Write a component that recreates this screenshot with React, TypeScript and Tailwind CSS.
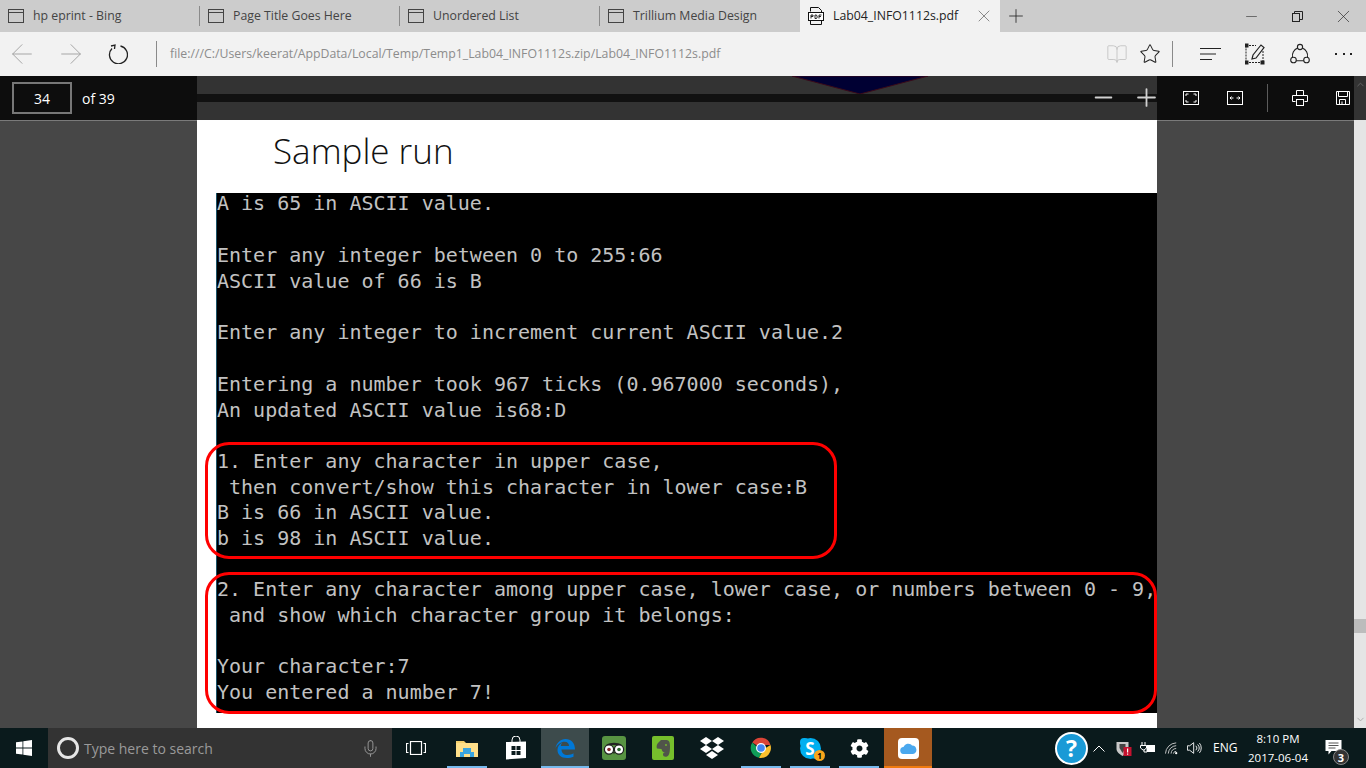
import React from 'react';
import { Minus, Plus, X, ArrowLeft, ArrowRight, Star, BookOpen, ChevronUp, ChevronDown, Mic } from 'lucide-react';
import { FaCog } from 'react-icons/fa';

const ui = "font-['Open_Sans',sans-serif]";

const terminalLines = [
  '',
  'Enter any integer between 0 to 255:66',
  'ASCII value of 66 is B',
  '',
  'Enter any integer to increment current ASCII value.2',
  '',
  'Entering a number took 967 ticks (0.967000 seconds),',
  'An updated ASCII value is68:D',
  '',
  '1. Enter any character in upper case,',
  ' then convert/show this character in lower case:B',
  'B is 66 in ASCII value.',
  'b is 98 in ASCII value.',
  '',
  '2. Enter any character among upper case, lower case, or numbers between 0 - 9,',
  ' and show which character group it belongs:',
  '',
  'Your character:7',
  'You entered a number 7!',
];

function TabIcon() {
  return (
    <svg width="16" height="14" viewBox="0 0 16 14" fill="none" stroke="#444" strokeWidth="1">
      <rect x="0.5" y="0.5" width="15" height="13" />
      <path d="M0.5 3.5h15" />
    </svg>
  );
}

function Tab({ title }: { title: string }) {
  return (
    <div className="w-[200px] h-full flex items-center pl-[8px] relative">
      <TabIcon />
      <span className="ml-[9px] text-[12.3px] text-[#444]">{title}</span>
      <div className="absolute right-0 top-[6px] h-[20px] w-px bg-[#8a8a8a]" />
    </div>
  );
}

function TabBar() {
  return (
    <div className={`h-[32px] bg-[#cccccc] flex items-center shrink-0 ${ui}`}>
      <Tab title="hp eprint - Bing" />
      <Tab title="Page Title Goes Here" />
      <Tab title="Unordered List" />
      <div className="w-[200px] h-full flex items-center pl-[8px]">
        <TabIcon />
        <span className="ml-[9px] text-[12.3px] text-[#444]">Trillium Media Design</span>
      </div>
      <div className="w-[200px] h-full bg-[#f2f2f2] flex items-center pl-[8px] pr-[6px]">
        <svg width="16" height="20" viewBox="0 0 16 20" fill="none" stroke="#111" strokeWidth="1">
          <path d="M2.5 5.5V1.5h8l3 3v2M2.5 15v3.5h11V15" />
          <rect x="0.5" y="6.5" width="15" height="8" fill="#fff" />
          <path d="M3 12.500V9h2v1.500H3M7 9v3.500h1.500l.8-1.500L8.500 9zM11 12.500V9h2.500M11 10.500h2" strokeWidth="0.9" />
        </svg>
        <span className="ml-[9px] text-[12.3px] text-[#222]">Lab04_INFO1112s.pdf</span>
        <X className="ml-auto text-[#555]" size={20} strokeWidth={0.8} />
      </div>
      <Plus className="ml-[5px] text-[#222]" size={22} strokeWidth={0.9} />
      <div className="ml-auto flex items-center h-full text-[#222]">
        <div className="w-[46px] flex justify-center"><Minus size={17} strokeWidth={0.8} /></div>
        <div className="w-[46px] flex justify-center">
          <svg width="11" height="11" viewBox="0 0 11 11" fill="none" stroke="#222"><rect x="0.500" y="2.500" width="7" height="8" /><path d="M2.500 2.500v-2h8v8h-3" /></svg>
        </div>
        <div className="w-[46px] flex justify-center"><X size={21} strokeWidth={0.75} /></div>
      </div>
    </div>
  );
}

function AddressBar() {
  return (
    <div className={`h-[44px] bg-[#f2f2f2] flex items-center shrink-0 ${ui}`}>
      <ArrowLeft className="ml-[6px] text-[#a0a0a0]" size={32} strokeWidth={0.7} />
      <ArrowRight className="ml-[17px] text-[#a0a0a0]" size={32} strokeWidth={0.7} />
      <svg className="ml-[21px]" width="20" height="20" viewBox="0 0 20 20" fill="none" stroke="#222" strokeWidth="1.300">
        <path d="M12.500 2A9 9 0 1 1 4 4.500" />
        <path d="M3 2l4-1-.5 4" />
      </svg>
      <div className="ml-[28px] w-px h-[26px] bg-[#8a8a8a]" />
      <span className="ml-[13px] text-[12.3px] text-[#8c8c8c]">file:///C:/Users/keerat/AppData/Local/Temp/Temp1_Lab04_INFO1112s.zip/Lab04_INFO1112s.pdf</span>
      <div className="ml-auto flex items-center">
        <BookOpen className="text-[#c4c4c4]" size={22} strokeWidth={1} />
        <Star className="ml-[11px] text-[#222]" size={22} strokeWidth={1.1} />
        <div className="ml-[11px] w-px h-[26px] bg-[#8a8a8a]" />
        <svg className="ml-[27px]" width="22" height="14" viewBox="0 0 22 14" stroke="#222" strokeWidth="1.200"><path d="M0 1.500h21M0 7h16M0 12.500h12" /></svg>
        <svg className="ml-[23px]" width="20" height="22" viewBox="0 0 20 22" fill="none" stroke="#222" strokeWidth="1">
          <path d="M1 2.500h10M1 19.500h17M1 2.500v17M18 8v11.500" strokeDasharray="2 1" />
          <rect x="0" y="1" width="3" height="3" fill="#222" /><rect x="0" y="18" width="3" height="3" fill="#222" /><rect x="16" y="18" width="3" height="3" fill="#222" />
          <path d="M7 16l1-4L16 2l3 2.500L11 15z" strokeWidth="1.200" />
        </svg>
        <svg className="ml-[25px]" width="20" height="22" viewBox="0 0 20 22" fill="none" stroke="#222" strokeWidth="1.100">
          <path d="M7.700 5A8.500 8.500 0 0 0 2.500 14.500M12.300 5A8.500 8.500 0 0 1 17.500 14.500M6.200 17.800h7.600" />
          <circle cx="10" cy="4" r="2.600" /><circle cx="3.500" cy="17" r="2.800" /><circle cx="16.500" cy="17" r="2.800" />
        </svg>
        <div className="ml-[25px] mr-[14px] w-[17px] flex justify-between">
          <span className="w-[2px] h-[2px] bg-[#222]" /><span className="w-[2px] h-[2px] bg-[#222]" /><span className="w-[2px] h-[2px] bg-[#222]" />
        </div>
      </div>
    </div>
  );
}

function PdfToolbar() {
  return (
    <div className={`h-[44px] flex shrink-0 ${ui}`}>
      <div className="w-[197px] bg-[#0d0d0d] flex items-center pl-[12px]">
        <div className="w-[60px] h-[32px] border-2 border-[#777] flex items-center justify-center text-[14px] text-white">34</div>
        <span className="ml-[10px] text-[14px] text-white">of 39</span>
      </div>
      <div className="flex-1 relative flex flex-col">
        <div className="h-[18px] bg-[#333333]" />
        <div className="h-[8px] bg-[#111111]" />
        <div className="h-[18px] bg-[#333333]" />
        <svg className="absolute left-[595px] top-0" width="136" height="18" viewBox="0 0 136 18">
          <polygon points="0,0 136,0 68,18" fill="#000033" stroke="#3a0a1a" strokeWidth="1" />
        </svg>
        <Minus className="absolute right-[40px] top-[8px] text-[#d0d0d0]" size={27} strokeWidth={1.600} />
        <Plus className="absolute -right-[4px] top-[7px] text-[#d0d0d0]" size={29} strokeWidth={1.500} />
      </div>
      <div className="w-[197px] bg-[#0d0d0d] flex items-center">
        <svg className="ml-[26px]" width="16" height="14" viewBox="0 0 16 14" fill="none" stroke="#fff">
          <rect x="0.500" y="0.500" width="15" height="13" />
          <path d="M3 5V3h2.500M13 5V3h-2.500M3 9v2h2.500M13 9v2h-2.500" />
        </svg>
        <svg className="ml-[28px]" width="16" height="14" viewBox="0 0 16 14" fill="none" stroke="#fff">
          <rect x="0.500" y="0.500" width="15" height="13" />
          <path d="M3 7h3.500M13 7H9.500M4.500 5.500L3 7l1.500 1.500M11.500 5.500L13 7l-1.500 1.500" />
        </svg>
        <div className="ml-[24px] w-px h-[28px] bg-[#5c5c5c]" />
        <svg className="ml-[24px]" width="16" height="16" viewBox="0 0 16 16" fill="none" stroke="#fff">
          <path d="M4.500 5.500v-5h7v5M3.500 11.500h-3v-6h15v6h-3" />
          <rect x="4.500" y="9.500" width="7" height="6" />
        </svg>
        <svg className="ml-[28px]" width="14" height="14" viewBox="0 0 14 14" fill="none" stroke="#fff">
          <path d="M0.500 0.500h13v13h-13z" />
          <path d="M2.500 0.500v5h9v-5M3.500 13.500v-5h6v5M6 10.500v3" />
        </svg>
      </div>
      <div className="w-[12px] bg-[#333333] flex justify-center pt-[3px]">
        <ChevronUp className="text-[#666]" size={11} />
      </div>
    </div>
  );
}

function Terminal() {
  return (
    <div className="ml-[19px] h-[520px] bg-black border-l border-[#1b5468] overflow-hidden relative font-['DejaVu_Sans_Mono',monospace] text-[20px] text-[#c2c2c2] whitespace-pre">
      {/* first line sits against the top edge of the pasted image */}
      <div className="h-[24.700px] leading-[20px]">A is 65 in ASCII value.</div>
      {terminalLines.map((line, i) => (
        <div key={i} className="h-[25.700px] leading-[25.700px]">{line}</div>
      ))}
    </div>
  );
}

function PdfView() {
  return (
    <div className="flex-1 min-h-0 flex bg-[#474747]">
      <div className="w-[197px] border-t border-[#7a7a7a]" />
      <div className="w-[960px] bg-white relative">
        <div className="h-[73px] pl-[76px] pt-[8px] font-['Open_Sans',sans-serif] font-light text-[35px] leading-[46px] text-[#111]">Sample run</div>
        <Terminal />
        {/* red marker boxes drawn over the page */}
        <div className="absolute left-[8px] top-[322px] w-[632px] h-[117px] rounded-[24px] border-[3px] border-[#ff0000]" />
        <div className="absolute left-[8px] top-[452px] w-[952px] h-[142px] rounded-[24px] border-[3px] border-[#ff0000]" />
      </div>
      <div className="w-[197px] border-t border-[#7a7a7a]" />
      <div className="w-[12px] bg-[#e5e5e5] relative flex flex-col justify-end items-center pb-[3px]">
        <div className="absolute left-0 top-[499px] w-[12px] h-[14px] bg-[#bcbcbc]" />
        <ChevronDown className="text-[#aaa]" size={11} />
      </div>
    </div>
  );
}

function AppSlot({ children, active, open, orange }: { children: React.ReactNode; active?: boolean; open?: boolean; orange?: boolean }) {
  const bg = orange ? 'bg-[#a5591f]' : active ? 'bg-[#3d4b4c]' : '';
  return (
    <div className={`w-[48px] h-full relative flex items-center justify-center ${bg}`}>
      {children}
      {(open || active) && (
        <div className={`absolute bottom-0 h-[2px] ${orange ? 'left-0 right-0 bg-[#f07a10]' : active ? 'left-0 right-0 bg-[#76b9ed]' : 'left-[4px] right-[4px] bg-[#76b9ed]'}`} />
      )}
    </div>
  );
}

function Taskbar() {
  return (
    <div className={`h-[40px] bg-[#0a1a1c] flex items-center shrink-0 ${ui}`}>
      <div className="w-[48px] flex justify-center">
        <svg width="16" height="16" viewBox="0 0 16 16" fill="#fff"><path d="M0 2.300l6.500-.9v6.200H0zM7.300 1.300L16 0v7.600H7.300zM0 8.400h6.500v6.200L0 13.700zM7.300 8.400H16V16l-8.700-1.300z" /></svg>
      </div>
      <div className="w-[344px] h-full bg-[#333333] flex items-center pl-[9px]">
        <div className="w-[22px] h-[22px] rounded-full border-[3px] border-[#e6e6e6]" />
        <span className="ml-[5px] text-[14px] text-[#9a9a9a]">Type here to search</span>
        <Mic className="ml-auto mr-[12px] text-[#9a9a9a]" size={19} strokeWidth={1.200} />
      </div>
      <div className="w-[51px] flex pl-[14px]">
        <svg width="20" height="14" viewBox="0 0 20 14" fill="none" stroke="#fff" strokeWidth="1.200">
          <rect x="4.500" y="0.500" width="11" height="13" />
          <path d="M2.500 2.500H.5v9h2M17.500 2.500h2v9h-2" />
        </svg>
      </div>
      <div className="flex gap-[1px] h-full">
        <AppSlot open>
          <svg width="22" height="18" viewBox="0 0 22 18">
            <path d="M0 2h8l2 2h12v14H0z" fill="#f4cf6c" />
            <path d="M0 4h22v14H0z" fill="#ffe08a" />
            <path d="M4 18v-5h3V9h8v4h3v5h-4v-3H8v3z" fill="#3aa5e0" />
          </svg>
        </AppSlot>
        <AppSlot>
          <svg width="22" height="24" viewBox="0 0 22 24" fill="#fff">
            <path d="M7 7V4a4 4 0 0 1 8 0v3" fill="none" stroke="#fff" strokeWidth="1" />
            <path d="M1 6l20-.5V22l-20 1.500z" />
            <path d="M6.500 10h4v4h-4zM11.500 10h4v4h-4zM6.500 15h4v4h-4zM11.500 15h4v4h-4z" fill="#0a1a1c" />
          </svg>
        </AppSlot>
        <AppSlot active>
          <svg width="20" height="21" viewBox="0 0 20 21">
            <path d="M10.500 1C16 1 20 5 20 11.500H6.500C6.500 15 9 17 12.500 17C15 17 17 16.300 18.500 15.300V18.800C16.500 19.800 14.500 20 12 20C6 20 2.500 16.500 2.500 12C2.500 9 4 6 7.500 4.500C6.500 5.500 6 6.500 5.800 8H14C14 5.500 12.500 3.800 9.500 3.800C6 3.800 2.500 6.500 .5 10C1.500 5 5.500 1 10.500 1z" fill="#0078d7" />
          </svg>
        </AppSlot>
        <AppSlot>
          <div className="w-[24px] h-[24px] rounded-[3px] bg-[#589442] flex items-center justify-center">
            <svg width="22" height="13" viewBox="0 0 22 13">
              <path d="M3 3C7 0 15 0 19 3z" fill="#222" />
              <circle cx="6" cy="7.500" r="4.600" fill="#fff" stroke="#222" strokeWidth="1.200" /><circle cx="16" cy="7.500" r="4.600" fill="#fff" stroke="#222" strokeWidth="1.200" />
              <circle cx="6" cy="7.500" r="1.800" fill="#8a2b2b" /><circle cx="16" cy="7.500" r="1.800" fill="#2b6a2b" />
              <path d="M10 10l1 2.500 1-2.500z" fill="#222" />
            </svg>
          </div>
        </AppSlot>
        <AppSlot>
          <div className="w-[22px] h-[24px] rounded-[2px] bg-[#76bf2c] flex items-center justify-center">
            <svg width="16" height="19" viewBox="0 0 16 19">
              <path d="M3 4l3-3h5c3 0 4 2 4 6 0 5-.5 10-3 10.500-2 .5-4 0-4-2 0-2 2-2.500 3-2-3 0-4-1-4.500-3.500L2 9.500C1 7.500 2 5 3 4z" fill="#50544a" />
              <circle cx="11" cy="6" r="0.900" fill="#76bf2c" />
            </svg>
          </div>
        </AppSlot>
        <AppSlot>
          <svg width="24" height="22" viewBox="0 0 24 22" fill="#fff">
            <path d="M6 0l6 4-6 4-6-4zM18 0l6 4-6 4-6-4zM6 8l6 4-6 4-6-4zM18 8l6 4-6 4-6-4zM12 14l6 4-6 4-6-4z" />
          </svg>
        </AppSlot>
        <AppSlot open>
          <svg width="22" height="22" viewBox="0 0 22 22">
            <path d="M11 11L2.300 5.500A10 10 0 0 1 20.500 8H11z" fill="#db4437" />
            <path d="M2.300 5.500A10 10 0 0 0 9 20.800L13 13H10z" fill="#0f9d58" />
            <path d="M20.500 8A10 10 0 0 1 9 20.800L14 12z" fill="#fbc02d" />
            <circle cx="11" cy="11" r="5" fill="#fff" /><circle cx="11" cy="11" r="3.800" fill="#4285f4" />
          </svg>
        </AppSlot>
        <AppSlot open>
          <div className="w-[21px] h-[21px] rounded-full bg-[#00aff0] flex items-center justify-center font-bold text-[17px] leading-none text-white relative">
            <div className="absolute left-0 top-0 w-[9px] h-[9px] rounded-[4px] bg-[#00aff0]" />
            <div className="absolute right-0 bottom-0 w-[9px] h-[9px] rounded-[4px] bg-[#00aff0]" />
            <span className="relative">S</span>
          </div>
          <div className="absolute left-[28px] top-[22px] w-[11px] h-[11px] rounded-full bg-[#f8a51b] flex items-center justify-center text-[8px] leading-none font-bold text-black">1</div>
        </AppSlot>
        <AppSlot open>
          <FaCog className="text-white" size={19} />
        </AppSlot>
        <AppSlot orange open>
          <div className="w-[21px] h-[21px] rounded-[4px] bg-white flex items-center justify-center">
            <svg width="17" height="11" viewBox="0 0 17 11"><path d="M4 11a3.500 3.500 0 0 1-.5-7A5 5 0 0 1 12 2.500 4.300 4.300 0 0 1 13 11z" fill="#4aa8ee" /></svg>
          </div>
        </AppSlot>
      </div>
      <div className="ml-[123px] flex items-center h-full">
        <div className="w-[33px] h-[33px] rounded-full bg-[#1a9ad6] border-2 border-white flex items-center justify-center text-white text-[23px] font-bold leading-none">?</div>
        <svg className="ml-[5px]" width="12" height="7" viewBox="0 0 12 7" fill="none" stroke="#fff"><path d="M.5 6.500L6 1l5.500 5.500" /></svg>
        <svg className="ml-[10px]" width="17" height="17" viewBox="0 0 16 17">
          <path d="M1 2h12v7c0 3-3 5-6 7-3-2-6-4-6-7z" fill="#c8c8c8" />
          <path d="M4 4h6v4l-3 5-3-5z" fill="#444" />
          <rect x="8" y="7" width="8" height="9" fill="#c4122f" /><rect x="11.500" y="8.500" width="1.200" height="4" fill="#fff" /><rect x="11.500" y="13.500" width="1.200" height="1.200" fill="#fff" />
        </svg>
        <svg className="ml-[7px]" width="16" height="12" viewBox="0 0 16 12" fill="none" stroke="#fff">
          <path d="M3 0v3M6 0v3M1.500 3.500h6V6L5 8H4L1.500 6zM5 8v2h3" />
          <rect x="8" y="3.500" width="7.500" height="6" fill="#fff" />
        </svg>
        <svg className="ml-[10px]" width="14" height="14" viewBox="0 0 15 14" fill="none" stroke="#ccc" strokeWidth="1">
          <path d="M0.500 13A12 12 0 0 1 12 1.500M3.500 13A9 9 0 0 1 12 4.500M6.500 13A6 6 0 0 1 12 7.500M9 13a3 3 0 0 1 3-2.500" />
          <circle cx="12" cy="12.500" r="1.200" fill="#fff" stroke="none" />
        </svg>
        <svg className="ml-[8px]" width="16" height="14" viewBox="0 0 18 14" fill="none" stroke="#fff">
          <path d="M0.500 4.500h2.500L7.500 1v12L3 9.500H.5z" />
          <path d="M10 4.500a3.500 3.500 0 0 1 0 5M12 3a6 6 0 0 1 0 8M14 1.500a8.500 8.500 0 0 1 0 11" />
        </svg>
        <span className="ml-[10px] w-[23px] text-[12px] text-white whitespace-nowrap">ENG</span>
        <div className="ml-[13px] w-[58px] flex flex-col items-center text-[11.500px] leading-[19px] text-white whitespace-nowrap">
          <span>8:10 PM</span>
          <span>2017-06-04</span>
        </div>
        <div className="ml-[18px] w-[24px] relative h-full">
          <svg width="17" height="15" viewBox="0 0 16 15" className="absolute left-0 top-[12px]">
            <path d="M0 0h16v11H6l-3 3.500V11H0z" fill="#fff" />
            <path d="M3 3h10M3 5.500h10M3 8h7" stroke="#555" strokeWidth="1" />
          </svg>
          <div className="absolute left-[8px] top-[21px] w-[16px] h-[16px] rounded-full bg-[#333] border border-[#888] flex items-center justify-center text-[11px] leading-none font-bold text-white">3</div>
        </div>
      </div>
    </div>
  );
}

export default function App() {
  return (
    <div className="w-[1366px] h-[768px] flex flex-col overflow-hidden">
      <TabBar />
      <AddressBar />
      <PdfToolbar />
      <PdfView />
      <Taskbar />
    </div>
  );
}
